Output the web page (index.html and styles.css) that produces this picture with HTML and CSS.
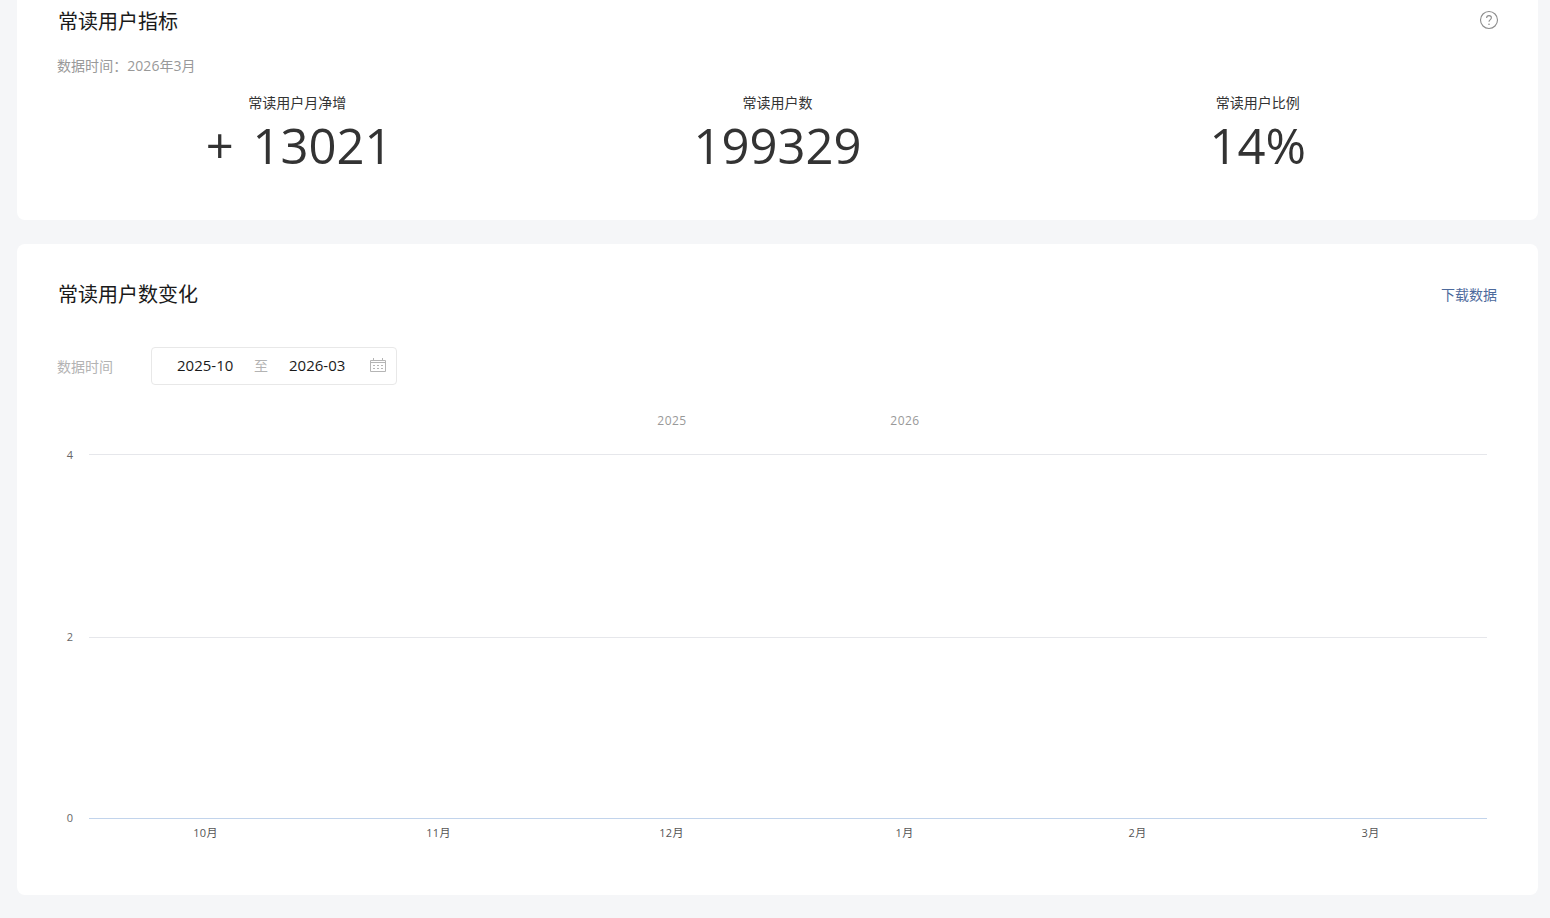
FILE: index.html
```html
<!DOCTYPE html>
<html lang="zh-CN">
<head>
	<meta charset="UTF-8">
	<title>常读用户分析</title>

	<link rel="stylesheet" href="styles.css">
</head>
<body>

	<section class="card card-metrics">
		<div class="card-head">
			<h2>常读用户指标</h2>
			<svg class="help" width="20" height="20" viewBox="0 0 20 20">
				<circle cx="10" cy="10" r="8.5" fill="none" stroke="#8c8c8c" stroke-width="1.1"/>
				<path d="M7.6 8c0-1.5 1-2.4 2.4-2.4s2.4.9 2.4 2.2c0 1-.5 1.5-1.300 2.100-.8.6-1.100 1-1.100 1.900" fill="none" stroke="#8c8c8c" stroke-width="1.100"/>
				<circle cx="10" cy="14.200" r=".8" fill="#8c8c8c"/>
			</svg>
		</div>
		<p class="data-time">数据时间：2026年3月</p>
		<div class="metrics">
			<div class="metric">
				<label>常读用户月净增</label>
				<span class="value">+ 13021</span>
			</div>
			<div class="metric">
				<label>常读用户数</label>
				<span class="value">199329</span>
			</div>
			<div class="metric">
				<label>常读用户比例</label>
				<span class="value">14%</span>
			</div>
		</div>
	</section>

	<section class="card card-chart">
		<div class="card-head">
			<h2>常读用户数变化</h2>
			<a class="download">下载数据</a>
		</div>
		<div class="filter">
			<label>数据时间</label>
			<div class="range">
				<span class="date">2025-10</span>
				<span class="sep">至</span>
				<span class="date">2026-03</span>
				<svg class="calendar" width="16" height="14" viewBox="0 0 16 14">
					<path d="M.5 2.500h15v11H.5zM3.500 0v3M12.500 0v3M.5 4.500h15" fill="none" stroke="#b5b5b5"/>
					<path d="M3 7h2v1H3zM7 7h2v1H7zM11 7h2v1h-2zM3 10h2v1H3zM7 10h2v1H7zM11 10h2v1h-2z" fill="#b5b5b5"/>
				</svg>
			</div>
		</div>
		<svg class="chart" width="1440" height="440" viewBox="0 0 1440 440">
			<g class="years">
				<text x="615" y="15">2025</text>
				<text x="848" y="15">2026</text>
			</g>
			<path d="M32 44.500H1430M32 227.500H1430" stroke="#e6e7eb"/>
			<path d="M32 408.500H1430" stroke="#c2d4ec"/>
			<g class="y-axis">
				<text x="16" y="49">4</text>
				<text x="16" y="231">2</text>
				<text x="16" y="412">0</text>
			</g>
			<g class="x-axis">
				<text x="148.500" y="427">10月</text>
				<text x="381.500" y="427">11月</text>
				<text x="614.500" y="427">12月</text>
				<text x="847.500" y="427">1月</text>
				<text x="1080.500" y="427">2月</text>
				<text x="1313.500" y="427">3月</text>
			</g>
		</svg>
	</section>

</body>
</html>
```

FILE: styles.css
```css
body {
	font-family: "Open Sans", "Noto Sans CJK SC", sans-serif;
	background: #f5f6f8;
	margin: 0;
	height: 918px;
	padding: 0 12px 0 17px;
	box-sizing: border-box;
	overflow: hidden;
}

.card {
	background: #fff;
	padding: 0 40px;
}

.card-metrics {
	height: 220px;
	box-sizing: border-box;
	border-radius: 0 0 8px 8px;
	margin-bottom: 24px;
}

.card-chart {
	height: 651px;
	box-sizing: border-box;
	border-radius: 8px;
	padding-top: 36px;
}

.card-head {
	display: flex;
	justify-content: space-between;
	align-items: center;
	height: 28px;
}

.card-metrics .card-head {
	padding-top: 7px;
}

h2 {
	margin: 0;
	padding: 1px 0 0 1px;
	font-size: 20px;
	font-weight: 400;
	color: #1a1a1a;
	line-height: 28px;
}

.help {
	margin: -2px -1px 0 0;
}

.data-time {
	margin: 21px 0 0;
	font-size: 14px;
	letter-spacing: .05px;
	line-height: 20px;
	color: #999;
}

.metrics {
	display: grid;
	grid-template-columns: repeat(3, 1fr);
	margin: 17px 0 0 0;
}

.metric {
	display: flex;
	flex-direction: column;
	align-items: center;
}

.metric label {
	font-size: 14px;
	line-height: 20px;
	color: #333;
}

.value {
	font-size: 49px;
	line-height: 68px;
	margin-top: -2px;
	color: #333;
	word-spacing: 6px;
}

.metric:first-child .value {
	padding-left: 4px;
}

.download {
	font-size: 14px;
	color: #4d6a9c;
	margin-right: 1px;
}

.filter {
	display: flex;
	align-items: center;
	margin-top: 39px;
}

.filter label {
	width: 94px;
	font-size: 14px;
	color: #b3b3b3;
}

.range {
	display: flex;
	align-items: center;
	width: 246px;
	height: 38px;
	box-sizing: border-box;
	border: 1px solid #e8e8e8;
	border-radius: 4px;
	padding: 0 10px 2px 25px;
}

.date {
	font-size: 15px;
	color: #1a1a1a;
	width: 56px;
	white-space: nowrap;
}

.sep {
	font-size: 14px;
	color: #b3b3b3;
	width: 56px;
	text-align: center;
}

.calendar {
	margin-left: auto;
}

.chart {
	display: block;
	margin-top: 25px;
}

.chart text {
	font-size: 11px;
	fill: #666;
	text-anchor: middle;
}

.chart .years text {
	font-size: 12px;
	letter-spacing: .5px;
	fill: #999;
}

.chart .y-axis text {
	text-anchor: end;
}

.chart .x-axis text {
	letter-spacing: .3px;
	fill: #555;
}
```
